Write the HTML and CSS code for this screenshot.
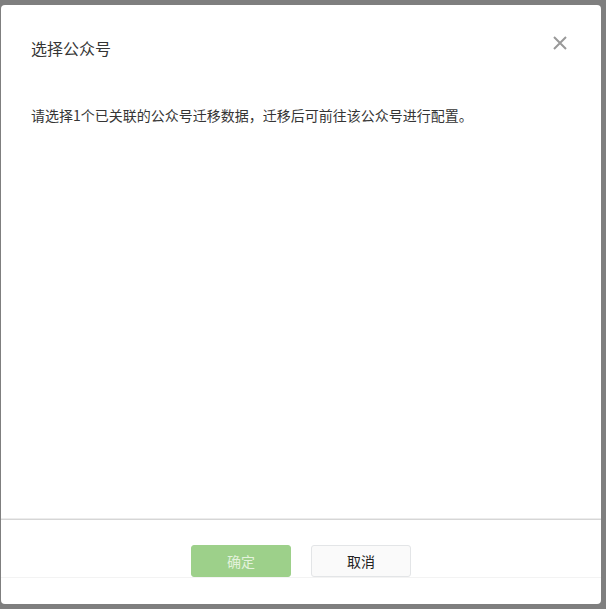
FILE: index.html
```html
<!DOCTYPE html>
<html lang="zh-CN">
<head>
    <meta charset="UTF-8">
    <meta name="viewport" content="width=device-width, initial-scale=1.0">
    <title>选择公众号</title>
    <link rel="stylesheet" href="styles.css">
</head>
<body>
    <div class="dialog">
        <div class="dialog-header">
            <h3 class="dialog-title">选择公众号</h3>
            <button class="dialog-close" aria-label="关闭">
                <svg width="14" height="14" viewBox="0 0 14 14">
                    <path d="M1 1L13 13M13 1L1 13" stroke="#999" stroke-width="2" fill="none"/>
                </svg>
            </button>
        </div>

        <div class="dialog-body">
            <p class="tips">请选择1个已关联的公众号迁移数据，迁移后可前往该公众号进行配置。</p>
        </div>

        <!-- footer buttons -->
        <div class="dialog-footer">
            <div class="btn-row">
                <button class="btn btn-primary" disabled>确定</button>
                <button class="btn btn-default">取消</button>
            </div>
        </div>
    </div>
</body>
</html>
```

FILE: styles.css
```css
body {
    margin: 0;
    height: 609px;
    overflow: hidden;
    background-color: #7f7f7f;
    font-family: "PingFang SC", "Noto Sans CJK SC", "Noto Sans", sans-serif;
    color: #353535;
}
.dialog {
    position: relative;
    display: flex;
    flex-direction: column;
    width: 600px;
    height: 599px;
    margin: 5px 0 0 1px;
    background: #fff;
    border-radius: 4px;
}
.dialog-header {
    padding: 31px 30px 0;
}
.dialog-title {
    margin: 0;
    font-size: 16px;
    line-height: 24px;
    font-weight: normal;
}
.dialog-close {
    position: absolute;
    top: 31px;
    right: 34px;
    width: 14px;
    height: 14px;
    padding: 0;
    border: none;
    background: none;
    cursor: pointer;
}
.dialog-close svg {
    display: block;
}
.dialog-body {
    flex: 1;
    padding: 45px 30px 0;
}
.tips {
    margin: 0;
    font-size: 14px;
    line-height: 20px;
}
.dialog-footer {
    border-top: 1px solid #d6d6d6;
    box-shadow: 0 -1px 0 #ececec;
    padding: 25px 0 26px;
}
.btn-row {
    display: flex;
    justify-content: center;
    gap: 20px;
    border-bottom: 1px solid #f3f3f3;
}
.btn {
    width: 100px;
    height: 32px;
    padding: 0;
    font-family: inherit;
    font-size: 14px;
    border-radius: 3px;
    cursor: pointer;
}
.btn-primary {
    background: #9dd08a;
    border: 1px solid #9dd08a;
    color: #e3f2dc;
    cursor: default;
}
.btn-default {
    background: #fafafa;
    border: 1px solid #e3e5e7;
    color: #222;
}
```
